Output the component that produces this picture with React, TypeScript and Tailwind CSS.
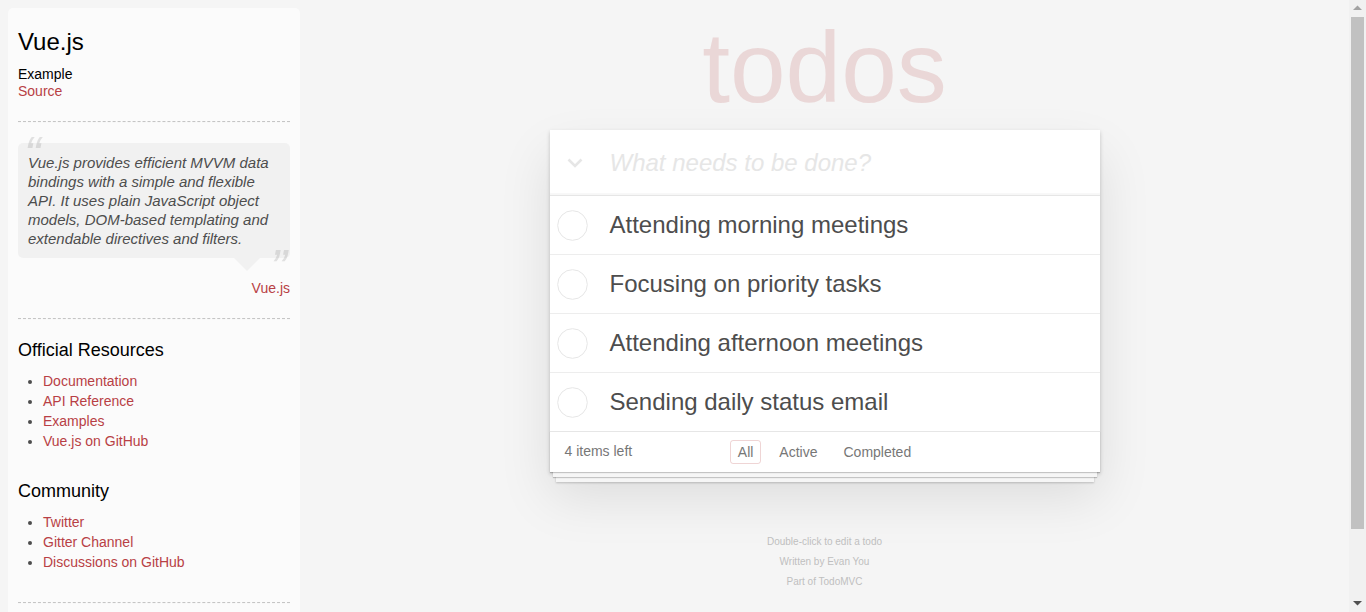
import React from "react"

const todos = [
    "Attending morning meetings",
    "Focusing on priority tasks",
    "Attending afternoon meetings",
    "Sending daily status email",
]

const resources = ["Documentation", "API Reference", "Examples", "Vue.js on GitHub"]
const community = ["Twitter", "Gitter Channel", "Discussions on GitHub"]

function Hr({ className = "" }: { className?: string }) {
    return <div className={`border-t border-b border-dashed border-t-[#c5c5c5] border-b-[#f7f7f7] ${className}`} />
}

function LearnBar() {
    return (
        <aside className="ml-2 mt-2 w-[292px] shrink-0 self-start rounded-[5px] bg-white/60 p-[10px] pb-[60px]">
            <h3 className="mt-[10px] text-[24px] leading-[1.2] text-black">Vue.js</h3>
            <h5 className="mt-[9px] text-[14px] leading-[17px] text-black">Example</h5>
            <a className="block leading-[17px] text-[#b83f45]">Source</a>
            <Hr className="mt-[21px]" />
            <blockquote className="relative mt-5 rounded-[5px] bg-black/[0.04] p-[10px]">
                <span className="absolute left-[6px] top-[-13px] text-[50px] italic leading-none opacity-15">“</span>
                <p className="text-[15px] italic leading-[19px] text-[#4d4d4d]">
                    Vue.js provides efficient MVVM data bindings with a simple and flexible API. It uses plain JavaScript object models, DOM-based templating and extendable directives and filters.
                </p>
                <span className="absolute bottom-[-35px] right-[3px] text-[50px] italic leading-none opacity-15">”</span>
                <span className="absolute right-[30px] top-full border-[13px] border-transparent border-t-black/[0.04]" />
            </blockquote>
            <div className="mt-5 text-right leading-5">
                <a className="text-[#b83f45]">Vue.js</a>
            </div>
            <Hr className="mt-5" />
            <h4 className="mt-5 text-[18px] leading-[1.2] text-black">Official Resources</h4>
            <ul className="ml-[25px] mt-[10px] list-disc">
                {resources.map((r) => (
                    <li key={r} className="leading-5">
                        <a className="text-[#b83f45]">{r}</a>
                    </li>
                ))}
            </ul>
            <h4 className="mt-[30px] text-[18px] leading-[1.2] text-black">Community</h4>
            <ul className="ml-[25px] mt-[9px] list-disc">
                {community.map((r) => (
                    <li key={r} className="leading-5">
                        <a className="text-[#b83f45]">{r}</a>
                    </li>
                ))}
            </ul>
            <Hr className="mt-[30px]" />
        </aside>
    )
}

function Circle() {
    return (
        <svg width="31" height="31" viewBox="0 0 31 31">
            <circle cx="15.5" cy="15.5" r="14.8" fill="none" stroke="#e6e6e6" strokeWidth="1" />
        </svg>
    )
}

function TodoApp() {
    return (
        <section className="mt-[13px] w-[550px] bg-white shadow-[0_2px_4px_0_rgba(0,0,0,0.2),0_25px_50px_0_rgba(0,0,0,0.1)]">
            <header className="flex h-[65px] items-center shadow-[inset_0_-2px_1px_rgba(0,0,0,0.03)]">
                <div className="w-[60px] pl-[17px] pt-[1px]">
                    <svg width="16" height="10" viewBox="0 0 16 10">
                        <path d="M1.5 1.5 L8 8 L14.5 1.5" fill="none" stroke="#e6e6e6" strokeWidth="2.6" />
                    </svg>
                </div>
                <span className="text-[24px] italic text-[#e6e6e6]">What needs to be done?</span>
            </header>
            <ul className="divide-y divide-[#ededed] border-t border-[#e6e6e6]">
                {todos.map((t) => (
                    <li key={t}>
                        <div className="flex h-[58px] items-center">
                            <div className="w-[60px] pl-[7px]">
                                <Circle />
                            </div>
                            <span className="text-[24px] text-[#4d4d4d]">{t}</span>
                        </div>
                    </li>
                ))}
            </ul>
            <footer className="grid h-[41px] grid-cols-[1fr_auto_1fr] items-center border-t border-[#e6e6e6] px-[15px] pb-[1px] text-[#777] shadow-[0_1px_1px_rgba(0,0,0,0.2),0_8px_0_-3px_#f6f6f6,0_9px_1px_-3px_rgba(0,0,0,0.2),0_16px_0_-6px_#f6f6f6,0_17px_2px_-6px_rgba(0,0,0,0.2)]">
                <span>4 items left</span>
                <div className="flex gap-[10px]">
                    <a className="h-[24px] rounded-[3px] border border-[rgba(175,47,47,0.2)] px-[7px] leading-[22px]">All</a>
                    <a className="h-[24px] rounded-[3px] border border-transparent px-[7px] leading-[22px]">Active</a>
                    <a className="h-[24px] rounded-[3px] border border-transparent px-[7px] leading-[22px]">Completed</a>
                </div>
                <span />
            </footer>
        </section>
    )
}

function ScrollBar() {
    return (
        <div className="flex w-[17px] shrink-0 flex-col bg-[#f1f1f1]">
            <div className="flex h-[17px] items-start justify-center pt-[5px]">
                <svg width="9" height="5" viewBox="0 0 9 5">
                    <path d="M0 5 L4.5 0.5 L9 5 Z" fill="#a3a3a3" />
                </svg>
            </div>
            <div className="mx-[2px] h-[512px] bg-[#c1c1c1]" />
            <div className="flex-1" />
            <div className="flex h-[17px] items-end justify-center pb-[6px]">
                <svg width="9" height="5" viewBox="0 0 9 5">
                    <path d="M0 0 L4.5 4.5 L9 0 Z" fill="#505050" />
                </svg>
            </div>
        </div>
    )
}

export default function App() {
    return (
        <div className="flex h-[612px] overflow-hidden bg-[#f5f5f5] font-['Liberation_Sans',Arial,sans-serif] text-[14px] text-[#4d4d4d]">
            <div className="flex min-w-0 flex-1 overflow-hidden">
                <LearnBar />
                <main className="flex flex-1 flex-col items-center">
                    <h1 className="mt-[17px] h-[100px] text-center text-[100px] leading-none text-[rgba(175,47,47,0.15)]">todos</h1>
                    <TodoApp />
                    <footer className="mt-[65px] flex flex-col gap-[10px] text-center text-[10px] leading-none text-[#bfbfbf]">
                        <p>Double-click to edit a todo</p>
                        <p>Written by Evan You</p>
                        <p>Part of TodoMVC</p>
                    </footer>
                </main>
            </div>
            <ScrollBar />
        </div>
    )
}
